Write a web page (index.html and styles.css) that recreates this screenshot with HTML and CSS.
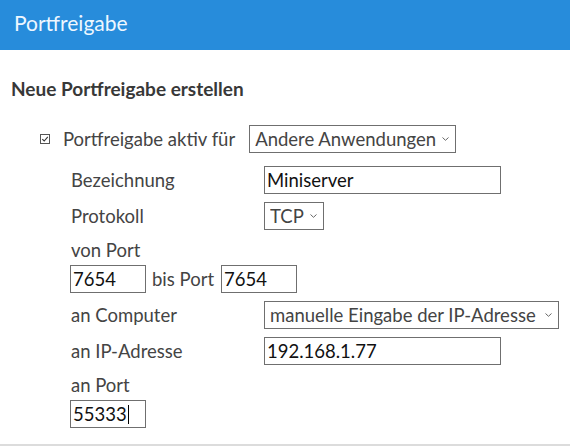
FILE: index.html
```html
<!DOCTYPE html>
<html lang="de">
<head>
<meta charset="utf-8">
<title>Portfreigabe</title>
<link rel="stylesheet" href="styles.css">
</head>
<body>
<header class="topbar">
  <h1 class="title">Portfreigabe</h1>
</header>
<main class="content">
  <h2 class="section-title">Neue Portfreigabe erstellen</h2>
  <div class="active-row">
    <label class="check-label">
      <span class="checkbox">
        <svg width="10" height="10" viewBox="0 0 10 10"><rect x="0.5" y="0.5" width="9" height="9" fill="#fff" stroke="#555"/><path d="M2.3 5.1 L4.2 7 L7.8 2.8" fill="none" stroke="#333" stroke-width="1.1"/></svg>
      </span>
      Portfreigabe aktiv für
    </label>
    <span class="select-wrap w-app">
      <select class="select"><option>Andere Anwendungen</option></select>
      <svg class="chev" width="7" height="4" viewBox="0 0 7 4"><path d="M0.5 0.5 L3.5 3.3 L6.5 0.5" fill="none" stroke="#666" stroke-width="1"/></svg>
    </span>
  </div>
  <div class="form">
    <div class="row">
      <span class="label">Bezeichnung</span>
      <input class="input w-long" type="text" value="Miniserver">
    </div>
    <div class="row">
      <span class="label">Protokoll</span>
      <span class="select-wrap w-tcp">
        <select class="select"><option>TCP</option></select>
        <svg class="chev" width="7" height="4" viewBox="0 0 7 4"><path d="M0.5 0.5 L3.5 3.3 L6.5 0.5" fill="none" stroke="#666" stroke-width="1"/></svg>
      </span>
    </div>
    <div class="stack">
      <span class="label">von Port</span>
      <div class="port-line">
        <input class="input w-port" type="text" value="7654">
        <span class="label">bis Port</span>
        <input class="input w-port" type="text" value="7654">
      </div>
    </div>
    <div class="row">
      <span class="label">an Computer</span>
      <span class="select-wrap w-comp">
        <select class="select"><option>manuelle Eingabe der IP-Adresse</option></select>
        <svg class="chev" width="7" height="4" viewBox="0 0 7 4"><path d="M0.5 0.5 L3.5 3.3 L6.5 0.5" fill="none" stroke="#666" stroke-width="1"/></svg>
      </span>
    </div>
    <div class="row">
      <span class="label">an IP-Adresse</span>
      <input class="input w-long" type="text" value="192.168.1.77">
    </div>
    <div class="stack">
      <span class="label">an Port</span>
      <div class="port-line">
        <span class="input-wrap">
          <input class="input w-port" type="text" value="55333">
          <span class="caret"></span>
        </span>
      </div>
    </div>
  </div>
</main>
<div class="bottom-rule"></div>
</body>
</html>
```
FILE: styles.css
```css
* { box-sizing: border-box; }
html, body { margin: 0; padding: 0; background: #fff; }
body {
  font-family: Lato, "Open Sans", "Liberation Sans", sans-serif;
  color: #444;
  width: 570px;
  height: 447px;
  overflow: hidden;
  display: flex;
  flex-direction: column;
}
.topbar {
  background: #278cdb;
  height: 50px;
  display: flex;
  align-items: center;
  padding-left: 14px;
  flex-shrink: 0;
}
.title {
  margin: 0;
  font-size: 21px;
  font-weight: 400;
  color: #eef7ff;
  line-height: 24px;
  position: relative;
  top: -2px;
}
.content {
  flex: 1;
}
.section-title {
  margin: 29px 0 0 11px;
  font-size: 19px;
  font-weight: 700;
  color: #383838;
  line-height: 20px;
}
.active-row {
  display: flex;
  align-items: center;
  margin: 26px 0 0 40px;
  height: 28px;
  gap: 14px;
}
.check-label {
  display: flex;
  align-items: center;
  gap: 13px;
  font-size: 18.5px;
  color: #444;
}
.checkbox { display: flex; width: 10px; height: 10px; }
.form {
  margin: 13px 0 0 71px;
  display: flex;
  flex-direction: column;
  gap: 8px;
}
.row {
  display: flex;
  align-items: center;
  height: 28px;
}
.row .label { width: 193px; }
.label {
  font-size: 18.5px;
  color: #444;
  line-height: 24px;
}
.stack {
  display: flex;
  flex-direction: column;
  gap: 3px;
  margin-left: -1px;
}
.stack .label { margin-left: 1px; }
.port-line {
  display: flex;
  align-items: center;
}
.port-line .label { margin: 0 7px 0 6px; }
.input-wrap { position: relative; display: inline-flex; }
.caret {
  position: absolute;
  left: 58px;
  top: 5px;
  width: 1px;
  height: 19px;
  background: #000;
}
.input {
  height: 28px;
  border: 1px solid #6f6f6f;
  border-radius: 0;
  font-family: inherit;
  font-size: 18.5px;
  color: #111;
  padding: 0 2px;
  background: #fff;
  outline: none;
}
.w-long { width: 237px; }
.w-port { width: 76px; }
.select-wrap {
  position: relative;
  display: inline-flex;
  height: 28px;
}
.select {
  appearance: none;
  -webkit-appearance: none;
  width: 100%;
  height: 28px;
  border: 1px solid #6f6f6f;
  border-radius: 0;
  background: #fff;
  font-family: inherit;
  font-size: 18.5px;
  color: #444;
  padding: 0 14px 0 5px;
  outline: none;
}
.chev {
  position: absolute;
  right: 7px;
  top: 12px;
  pointer-events: none;
}
.w-app { width: 207px; }
.w-tcp { width: 60px; }
.w-comp { width: 295px; }
.bottom-rule {
  height: 2px;
  background: #dcdcdc;
  margin-bottom: 1px;
  flex-shrink: 0;
}
```
